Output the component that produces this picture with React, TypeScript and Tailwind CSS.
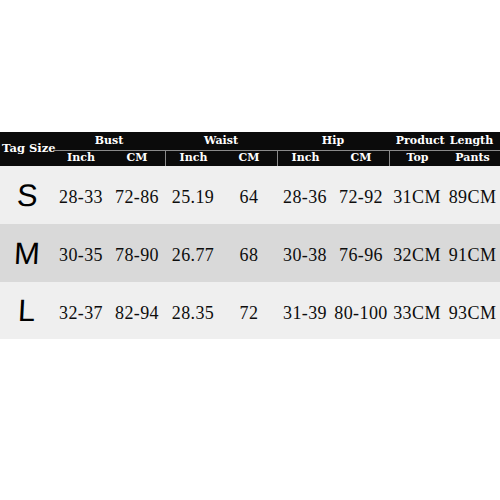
const SUB = ["Inch", "CM", "Inch", "CM", "Inch", "CM", "Top", "Pants"];

const ROWS = [
  { size: "S", bg: "bg-[#efefef]", cells: ["28-33", "72-86", "25.19", "64", "28-36", "72-92", "31CM", "89CM"] },
  { size: "M", bg: "bg-[#d9d9d9]", cells: ["30-35", "78-90", "26.77", "68", "30-38", "76-96", "32CM", "91CM"] },
  { size: "L", bg: "bg-[#efefef]", cells: ["32-37", "82-94", "28.35", "72", "31-39", "80-100", "33CM", "93CM"] },
];

const cols = "grid grid-cols-[53px_56px_56px_56px_56px_56px_56px_56px_55px]";

export default function App() {
  return (
    <div className="h-[500px] w-[500px] overflow-hidden bg-white pt-[132px]">
      <div className={[cols, "grid-rows-[18px_16px] bg-[#0b0b0b] font-['DejaVu_Serif',serif] text-[11px] font-bold text-white"].join(" ")}>
        <div className="row-span-2 flex items-center pl-[2px] text-[11.5px] whitespace-nowrap">Tag Size</div>
        <div className="col-span-2 flex items-center justify-center">Bust</div>
        <div className="col-span-2 flex items-center justify-center">Waist</div>
        <div className="col-span-2 flex items-center justify-center">Hip</div>
        <div className="col-span-2 flex items-center justify-center gap-[5px]">
          <span>Product</span>
          <span>Length</span>
        </div>
        {SUB.map((s, i) => (
          <div
            key={i}
            className={[
              "flex items-center justify-center border-t border-[#8a8a8a]",
              i === 2 || i === 4 || i === 6 ? "border-l" : "",
            ].join(" ")}
          >
            {s}
          </div>
        ))}
      </div>
      {ROWS.map((r, ri) => (
        <div key={r.size} className={[cols, r.bg, ri === 2 ? "h-[57px]" : "h-[58px]", "items-center"].join(" ")}>
          <div className="flex justify-center pl-[1px] font-['Liberation_Sans',sans-serif] text-[31px] leading-none font-normal text-black">
            <span className="-skew-x-3">{r.size}</span>
          </div>
          {r.cells.map((c, i) => (
            <div
              key={i}
              className="flex justify-center pt-[4px] font-['Liberation_Serif',serif] text-[18px] leading-none tracking-[0.4px] whitespace-nowrap text-[#0d0d0d]"
            >
              {c}
            </div>
          ))}
        </div>
      ))}
    </div>
  );
}
